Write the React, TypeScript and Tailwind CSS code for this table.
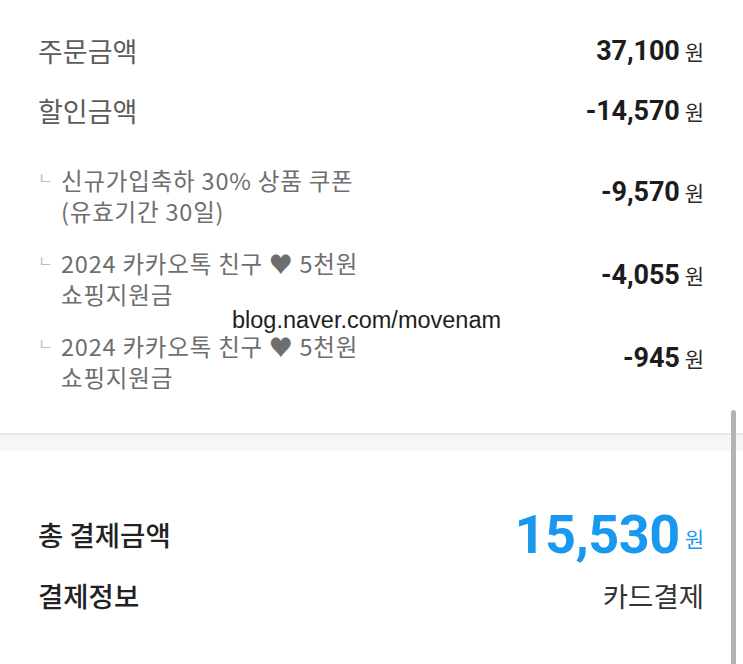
import React from 'react';

const KR = { fontFamily: '"Noto Sans CJK KR", sans-serif' };
const NUM = { fontFamily: 'Roboto, "Noto Sans CJK KR", sans-serif' };

interface SubItem {
  lines: string[];
  amount: string;
}

const subItems: SubItem[] = [
  { lines: ['신규가입축하 30% 상품 쿠폰', '(유효기간 30일)'], amount: '-9,570' },
  { lines: ['2024 카카오톡 친구 ♥ 5천원', '쇼핑지원금'], amount: '-4,055' },
  { lines: ['2024 카카오톡 친구 ♥ 5천원', '쇼핑지원금'], amount: '-945' },
];

const Amount: React.FC<{ value: string }> = ({ value }) => (
  <div className="flex items-center gap-[5px]">
    <span style={NUM} className="text-[27px] font-bold leading-[31px] text-[#1c1c1c] tracking-[-0.1px]">
      {value}
    </span>
    <span style={KR} className="text-[21px] leading-[31px] text-[#2a2a2a]">
      원
    </span>
  </div>
);

export default function App() {
  return (
    <div className="relative w-[743px] min-h-[664px] bg-white overflow-hidden">
      <div className="px-[38px] pt-[21px] pb-[40px] pr-[39px]">
        <div className="flex h-[60px] items-center justify-between">
          <span style={KR} className="text-[27px] text-[#5c5c5c]">주문금액</span>
          <Amount value="37,100" />
        </div>
        <div className="flex h-[60px] items-center justify-between">
          <span style={KR} className="text-[27px] text-[#5c5c5c]">할인금액</span>
          <Amount value="-14,570" />
        </div>

        <div className="mt-[24px] flex flex-col gap-[21px]">
          {subItems.map((item, i) => (
            <div key={i} className="flex items-start justify-between">
              <div className="flex">
                <span style={KR} className="w-[23px] text-[16px] leading-[31px] text-[#bdbdbd] -mt-[3px]">
                  ㄴ
                </span>
                <div style={KR} className="text-[23.5px] leading-[31px] text-[#6e6e6e] tracking-[0.8px]">
                  {item.lines.map((line, j) => (
                    <div key={j}>{line}</div>
                  ))}
                </div>
              </div>
              <div className="mt-[12px]">
                <Amount value={item.amount} />
              </div>
            </div>
          ))}
        </div>
      </div>

      <div className="border-t-2 border-[#e6e8ea] h-[18px] bg-[#f4f6f8]" />

      <div className="px-[38px] pr-[39px] pt-[52px]">
        <div className="flex h-[64px] items-center justify-between">
          <span style={KR} className="text-[27.5px] font-medium text-[#222]">총 결제금액</span>
          <div className="flex items-baseline gap-[5px]">
            <span style={NUM} className="text-[54px] font-bold leading-none text-[#1a98ef] tracking-[-0.5px]">
              15,530
            </span>
            <span style={KR} className="text-[21px] text-[#1a98ef] -translate-y-[6px]">원</span>
          </div>
        </div>
        <div className="flex h-[58px] items-center justify-between">
          <span style={KR} className="text-[27.5px] font-medium text-[#222]">결제정보</span>
          <span style={KR} className="text-[27.5px] text-[#333]">카드결제</span>
        </div>
      </div>

      <span
        style={{ fontFamily: '"Liberation Sans", Arial, sans-serif' }}
        className="absolute left-[232px] top-[303px] text-[23.5px] text-[#1e1e1e]"
      >
        blog.naver.com/movenam
      </span>

      <div className="absolute left-[731px] top-[410px] w-[5px] h-[260px] rounded-full bg-[#b3b3b3]" />
    </div>
  );
}
